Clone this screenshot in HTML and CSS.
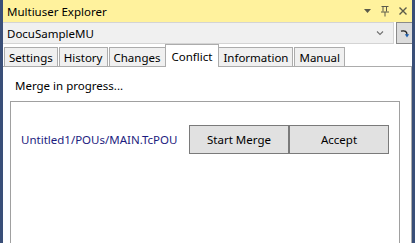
FILE: index.html
```html
<!DOCTYPE html>
<html>
<head>
<meta charset="utf-8">
<link rel="stylesheet" href="styles.css">
</head>
<body>
<div class="window">
  <div class="titlebar">
    <span class="title">Multiuser Explorer</span>
    <div class="tools">
      <svg class="tool" width="9" height="6" viewBox="0 0 9 6"><polygon points="1,1 8,1 4.5,5" fill="#5a5a4a"/></svg>
      <svg class="tool" width="10" height="12" viewBox="0 0 10 12"><path d="M1.5 1.5H8.5M3 1.5V6.5M6.5 1.5V6.5M1 7H9M5 7V11.5" stroke="#5a5a4a" stroke-width="1" fill="none"/></svg>
      <svg class="tool" width="10" height="10" viewBox="0 0 10 10"><path d="M1.5 1.5L8.5 8.5M8.5 1.5L1.5 8.5" stroke="#5a5a4a" stroke-width="1.4" fill="none"/></svg>
    </div>
  </div>
  <div class="toolbar">
    <div class="combo">
      <span class="combo-text">DocuSampleMU</span>
      <svg class="chev" width="8" height="6" viewBox="0 0 8 6"><path d="M1 1.5L4 4.5L7 1.5" stroke="#707070" stroke-width="1.1" fill="none"/></svg>
    </div>
    <div class="sync">
      <svg width="12" height="12" viewBox="0 0 12 12"><path d="M2 4.2C6 3.2 8.2 4.5 8 8" stroke="#222" stroke-width="1.3" fill="none"/><polygon points="5.8,7.2 10.2,7.2 8,10.4" fill="#1d5fb0"/></svg>
    </div>
  </div>
  <div class="tabs">
    <div class="tab">Settings</div>
    <div class="tab">History</div>
    <div class="tab">Changes</div>
    <div class="tab active">Conflict</div>
    <div class="tab">Information</div>
    <div class="tab">Manual</div>
  </div>
  <div class="panel">
    <div class="status">Merge in progress...</div>
    <div class="group">
      <div class="row">
        <span class="file">Untitled1/POUs/MAIN.TcPOU</span>
        <div class="buttons">
          <div class="btn">Start Merge</div>
          <div class="btn">Accept</div>
        </div>
      </div>
    </div>
  </div>
</div>
</body>
</html>
```
FILE: styles.css
```css
html, body {
  margin: 0;
  padding: 0;
  background: #ffffff;
}
body {
  font-family: "Noto Sans", "Liberation Sans", sans-serif;
  font-size: 12px;
  color: #000;
}
.window {
  width: 409px;
  height: 243px;
  border-left: 3px solid #3a4f78;
  border-right: 3px solid #3a4f78;
  display: flex;
  flex-direction: column;
  overflow: hidden;
  background: #fff;
}
.titlebar {
  height: 22px;
  flex: none;
  background: #fff29d;
  display: flex;
  align-items: center;
  justify-content: space-between;
  padding: 0 4px 0 4px;
}
.title {
  font-size: 11.5px;
  color: #000;
}
.tools {
  display: flex;
  align-items: center;
  gap: 8px;
}
.tool {
  display: block;
}
.toolbar {
  height: 22px;
  flex: none;
  display: flex;
  align-items: stretch;
  gap: 2px;
}
.combo {
  flex: 1;
  background: #f0f0f0;
  border: 1px solid #d4d4d4;
  border-left: none;
  display: flex;
  align-items: center;
  justify-content: space-between;
  padding: 0 9px 0 4px;
}
.combo-text {
  font-size: 11.5px;
}
.chev {
  display: block;
}
.sync {
  width: 15px;
  margin-right: -1px;
  border: 1px solid #8a8a8a;
  background: #dcdcdc;
  display: flex;
  align-items: center;
  justify-content: center;
}
.sync svg {
  display: block;
}
.tabs {
  height: 22px;
  flex: none;
  display: flex;
  align-items: flex-end;
  padding-left: 1px;
}
.tab {
  height: 19px;
  box-sizing: border-box;
  border: 1px solid #acacac;
  border-bottom: none;
  background: #f0f0f0;
  padding: 0 4px;
  margin-right: 1px;
  display: flex;
  align-items: center;
  font-size: 11.5px;
}
.tab.active {
  height: 23px;
  background: #fff;
  margin: 0 -1px 0 -2px;
  padding: 0 6px;
  position: relative;
  top: 1px;
  border-color: #acacac;
}
.panel {
  flex: 1;
  border-top: 1px solid #acacac;
  border-right: 1px solid #acacac;
  display: flex;
  flex-direction: column;
  padding-left: 7px;
  padding-right: 11px;
}
.status {
  height: 32px;
  display: flex;
  align-items: center;
  padding-left: 5px;
  padding-top: 2px;
  font-size: 11.5px;
}
.group {
  flex: 1;
  border: 1px solid #a0a0a0;
  border-bottom: none;
  padding: 23px 10px 0 10px;
}
.row {
  display: flex;
  align-items: center;
  justify-content: space-between;
}
.file {
  color: #1c1c80;
  font-size: 11.5px;
}
.buttons {
  display: flex;
}
.btn {
  width: 98px;
  height: 27px;
  border: 1px solid #7a7a7a;
  background: #e1e1e1;
  display: flex;
  align-items: center;
  justify-content: center;
  font-size: 11.5px;
}
```
